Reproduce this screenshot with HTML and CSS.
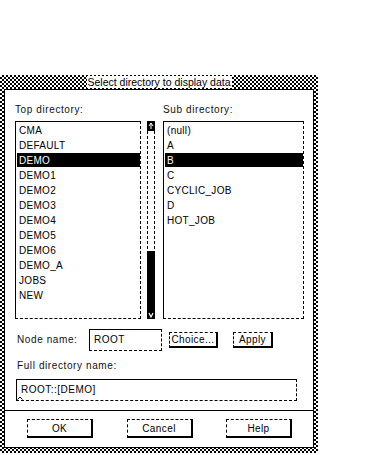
FILE: index.html
```html
<!DOCTYPE html>
<html lang="en">
<head>
  <meta charset="UTF-8">
  <title>Select directory to display data</title>
  <link rel="stylesheet" href="styles.css">
</head>
<body>
  <div class="dialog">
    <div class="titlebar"><span class="title">Select directory to display data</span></div>
    <div class="panel">
      <div class="lists">
        <div class="col col-top">
          <div class="label">Top directory:</div>
          <div class="list-row">
            <ul class="list top-list">
              <li>CMA</li>
              <li>DEFAULT</li>
              <li class="selected">DEMO</li>
              <li>DEMO1</li>
              <li>DEMO2</li>
              <li>DEMO3</li>
              <li>DEMO4</li>
              <li>DEMO5</li>
              <li>DEMO6</li>
              <li>DEMO_A</li>
              <li>JOBS</li>
              <li>NEW</li>
            </ul>
            <div class="scrollbar">
              <div class="arrow">
                <svg width="8" height="10" viewBox="0 0 8 10"><path d="M4 2 L6 5 M4 2 L2 5 M4 2.5 V8" stroke="#fff" stroke-width="1" fill="none"/></svg>
              </div>
              <div class="trough"><div class="thumb"></div></div>
              <div class="arrow arrow-down">
                <svg width="8" height="8" viewBox="0 0 8 8"><path d="M2 2 L4 6 L6 2" stroke="#fff" stroke-width="1.2" fill="none"/></svg>
              </div>
            </div>
          </div>
        </div>
        <div class="col col-sub">
          <div class="label">Sub directory:</div>
          <ul class="list sub-list">
            <li>(null)</li>
            <li>A</li>
            <li class="selected">B</li>
            <li>C</li>
            <li>CYCLIC_JOB</li>
            <li>D</li>
            <li>HOT_JOB</li>
          </ul>
        </div>
      </div>

      <div class="node-row">
        <span class="label node-label">Node name:</span>
        <div class="field node-field">ROOT</div>
        <button class="btn btn-small choice">Choice...</button>
        <button class="btn btn-small apply">Apply</button>
      </div>

      <div class="label full-label">Full directory name:</div>
      <div class="field full-field">
        ROOT::[DEMO]
        <svg class="caret" width="6" height="4" viewBox="0 0 6 4"><path d="M0.5 3.5 L3 1 L5.5 3.5" stroke="#000" fill="none"/></svg>
      </div>

      <div class="separator"></div>

      <div class="actions">
        <button class="btn btn-action">OK</button>
        <button class="btn btn-action">Cancel</button>
        <button class="btn btn-action">Help</button>
      </div>
    </div>
  </div>
</body>
</html>
```

FILE: styles.css
```css
body {
  margin: 0;
  background: #fff;
  color: #000;
  font-family: "Liberation Sans", Arial, sans-serif;
  font-size: 10px;
}

.dialog {
  width: 318px;
  margin-top: 75px;
  padding: 0 4px 5px;
  box-sizing: border-box;
  background-color: #fff;
  background-image: conic-gradient(#000 25%, #fff 0 50%, #000 0 75%, #fff 0);
  background-size: 4px 4px;
}

.titlebar {
  height: 14px;
  display: flex;
  align-items: center;
  justify-content: center;
}
.title {
  background: #fff;
  font-size: 10.5px;
  line-height: 12px;
  padding: 0 1px;
}

.panel {
  background: #fff;
  border: 1px solid #000;
  padding: 14px 0 9px;
}

.label {
  display: block;
  font-size: 10px;
  line-height: 12px;
  letter-spacing: 0.6px;
  color: #111;
}

.lists {
  display: flex;
  gap: 8px;
  padding-left: 10px;
}
.col {
  display: flex;
  flex-direction: column;
  gap: 5px;
}
.list-row {
  display: flex;
  gap: 6px;
}

.list {
  list-style: none;
  margin: 0;
  padding: 1px 0 0 1px;
  height: 198px;
  box-sizing: border-box;
  border-top: 1px solid #000;
  border-left: 1px solid #000;
  border-right: 1px dashed #000;
  border-bottom: 1px dashed #000;
}
.top-list { width: 126px; }
.sub-list { width: 141px; }
.list li {
  height: 15px;
  line-height: 15px;
  padding-left: 2px;
  letter-spacing: 0.3px;
  white-space: nowrap;
}
.list li.selected {
  background: #000;
  color: #fff;
  height: 14px;
  margin-bottom: 1px;
}

.scrollbar {
  width: 8px;
  height: 198px;
  box-sizing: border-box;
  display: flex;
  flex-direction: column;
  border-left: 1px dashed #000;
  border-right: 1px dashed #000;
}
.arrow {
  height: 10px;
  margin: 0 -1px;
  background: #000;
  display: flex;
  justify-content: center;
}
.arrow-down {
  height: 8px;
  align-items: center;
}
.trough {
  flex: 1;
  display: flex;
  flex-direction: column;
  justify-content: flex-end;
}
.thumb {
  height: 60px;
  margin: 0 -1px;
  background: #000;
}

.node-row {
  display: flex;
  align-items: center;
  margin-top: 10px;
  padding-left: 12px;
}
.node-label {
  width: 72px;
}

.field {
  box-sizing: border-box;
  height: 22px;
  line-height: 20px;
  padding-left: 4px;
  letter-spacing: 0.5px;
  border-top: 1px solid #000;
  border-left: 1px solid #000;
  border-right: 1px dashed #000;
  border-bottom: 1px dashed #000;
}
.node-field {
  width: 73px;
}

.btn {
  font-family: inherit;
  font-size: 10px;
  color: #000;
  background: #fff;
  padding: 0;
  box-sizing: border-box;
  letter-spacing: 0.4px;
  border-top: 1px dashed #000;
  border-left: 1px dashed #000;
  border-right: 2px solid #000;
  border-bottom: 2px solid #000;
}
.btn-small {
  height: 16px;
  line-height: 12px;
}
.choice {
  width: 49px;
  margin-left: 7px;
}
.apply {
  width: 40px;
  margin-left: 15px;
}

.full-label {
  margin: 9px 0 0 12px;
}
.full-field {
  position: relative;
  width: 281px;
  margin: 7px 0 0 11px;
}
.caret {
  position: absolute;
  left: 0;
  bottom: 0;
}

.separator {
  height: 1px;
  background: #000;
  margin-top: 9px;
}

.actions {
  display: flex;
  justify-content: space-between;
  padding: 8px 21px 0 22px;
}
.btn-action {
  width: 66px;
  height: 19px;
}
```
